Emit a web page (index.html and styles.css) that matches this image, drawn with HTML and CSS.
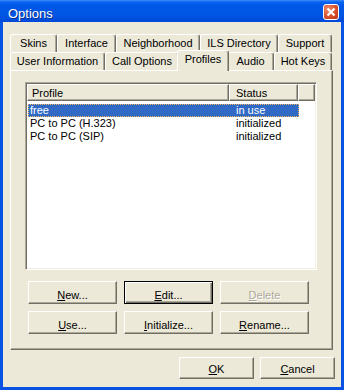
FILE: index.html
```html
<!doctype html>
<html lang="en">

<head>
  <meta charset="utf-8">
  <title>Options</title>
  <meta name="viewport" content="width=device-width, initial-scale=1">
  <link rel="stylesheet" href="styles.css">
</head>

<body>
  <div class="window">
    <div class="titlebar">
      <span class="title">Options</span>
      <span class="close-btn">
        <svg width="14" height="14" viewBox="0 0 14 14">
          <path d="M3.5 3.5 L10.5 10.5 M10.5 3.5 L3.5 10.5" stroke="#fff" stroke-width="2.2" fill="none" />
        </svg>
      </span>
    </div>

    <div class="client">
      <div class="tab-row tab-row-back">
        <div class="tab">Skins</div>
        <div class="tab">Interface</div>
        <div class="tab">Neighborhood</div>
        <div class="tab">ILS Directory</div>
        <div class="tab">Support</div>
      </div>
      <div class="tab-row tab-row-front">
        <div class="tab">User Information</div>
        <div class="tab">Call Options</div>
        <div class="tab selected">Profiles</div>
        <div class="tab">Audio</div>
        <div class="tab">Hot Keys</div>
      </div>

      <div class="panel">
        <div class="listview">
          <div class="lv-header">
            <div class="lv-col col-profile">Profile</div>
            <div class="lv-col col-status">Status</div>
            <div class="lv-col col-fill"></div>
          </div>
          <div class="lv-row selected"><span>free</span><span>in use</span></div>
          <div class="lv-row"><span>PC to PC (H.323)</span><span>initialized</span></div>
          <div class="lv-row"><span>PC to PC (SIP)</span><span>initialized</span></div>
        </div>

        <div class="btn-grid">
          <button class="btn"><u>N</u>ew...</button>
          <button class="btn btn-default"><u>E</u>dit...</button>
          <button class="btn" disabled><u>D</u>elete</button>
          <button class="btn"><u>U</u>se...</button>
          <button class="btn"><u>I</u>nitialize...</button>
          <button class="btn"><u>R</u>ename...</button>
        </div>
      </div>

      <div class="dialog-buttons">
        <button class="btn btn-dialog"><u>O</u>K</button>
        <button class="btn btn-dialog"><u>C</u>ancel</button>
      </div>
    </div>
  </div>
</body>

</html>
```

FILE: styles.css
```css
body {
  margin: 0;
  background: #fff;
  font-family: "Liberation Sans", Arial, sans-serif;
  font-size: 11px;
  color: #000;
}

.window {
  width: 344px;
  height: 390px;
  display: flex;
  flex-direction: column;
  background: #0652e2;
}

.titlebar {
  height: 22px;
  flex: none;
  display: flex;
  align-items: flex-start;
  justify-content: space-between;
  padding: 0 5px 0 8px;
  background: linear-gradient(#3d8ef8 0, #0c63f2 2px, #0058e8 5px, #0055e4 15px, #0049d9 22px);
  color: #fff;
}

.title {
  font-size: 13px;
  line-height: 15px;
  margin-top: 6px;
  text-shadow: 1px 1px #0a2f8f;
}

.close-btn {
  width: 16px;
  height: 16px;
  margin-top: 4px;
  box-sizing: border-box;
  border: 1px solid #fff;
  border-radius: 3px;
  background: radial-gradient(circle at 30% 30%, #f08a6a, #d9502c 55%, #b8341a);
  display: flex;
  align-items: center;
  justify-content: center;
}

.client {
  flex: 1;
  margin: 0 3px 3px;
  padding: 12px 8px 0 7px;
  background: #ece9d8;
  display: flex;
  flex-direction: column;
}

/* tab strip */

.tab-row {
  display: grid;
  height: 18px;
}

.tab-row-back {
  grid-template-columns: 47px 59px 84px 78px 54px;
}

.tab-row-front {
  grid-template-columns: 95px 74px 48px 47px 58px;
}

.tab {
  box-sizing: border-box;
  height: 18px;
  padding: 1px 0 0;
  border: 1px solid #fff;
  border-right-color: #716f64;
  border-bottom: none;
  border-radius: 3px 3px 0 0;
  box-shadow: inset -1px 0 #aca899;
  text-align: center;
  line-height: 15px;
  white-space: nowrap;
}

.tab.selected {
  position: relative;
  z-index: 1;
  height: 21px;
  margin: -2px -2px -1px;
  background: #ece9d8;
}

.panel {
  height: 280px;
  box-sizing: border-box;
  border: 1px solid #fff;
  border-right-color: #716f64;
  border-bottom-color: #716f64;
  box-shadow: inset -1px -1px #aca899;
  padding: 11px 0 0 14px;
}

/* list view */

.listview {
  width: 292px;
  height: 188px;
  box-sizing: border-box;
  padding: 1px;
  border: 1px solid;
  border-color: #aca899 #fff #fff #aca899;
  box-shadow: inset 1px 1px #716f64, inset -1px -1px #f1efe2;
  background: #fff;
}

.lv-header {
  display: flex;
  height: 17px;
  margin-bottom: 3px;
}

.lv-col {
  box-sizing: border-box;
  height: 17px;
  border: 1px solid;
  border-color: #fff #716f64 #716f64 #fff;
  box-shadow: inset -1px -1px #aca899;
  background: #ece9d8;
  padding: 1px 0 0 4px;
  line-height: 15px;
}

.col-profile {
  width: 202px;
}

.col-status {
  width: 69px;
  padding-left: 6px;
}

.col-fill {
  flex: 1;
}

.lv-row {
  display: grid;
  grid-template-columns: 201px 70px;
  width: 271px;
  height: 13px;
  margin-left: 1px;
  line-height: 13px;
  white-space: nowrap;
}

.lv-row span:first-child {
  padding-left: 2px;
}

.lv-row span:last-child {
  padding-left: 7px;
}

.lv-row.selected {
  background: #316ac5;
  color: #fff;
  outline: 1px dotted #f4b45a;
  outline-offset: -1px;
}

/* buttons */

.btn-grid {
  display: grid;
  grid-template-columns: repeat(3, 89px);
  column-gap: 7px;
  row-gap: 7px;
  margin: 11px 0 0 3px;
}

.btn {
  height: 23px;
  box-sizing: border-box;
  margin: 0;
  padding: 4px 0 0;
  border: 1px solid;
  border-color: #fff #716f64 #716f64 #fff;
  border-radius: 0;
  box-shadow: inset -1px -1px #aca899;
  background: #ece9d8;
  color: #000;
  font: inherit;
  line-height: 16px;
  text-align: center;
  vertical-align: top;
}

.btn-default {
  border-color: #000;
  box-shadow: inset 1px 1px #fff, inset -1px -1px #716f64, inset -2px -2px #aca899;
}

.btn:disabled {
  color: #aca899;
  text-shadow: 1px 1px #fff;
}

.dialog-buttons {
  display: flex;
  justify-content: flex-end;
  gap: 6px;
  margin: 7px -2px 0 0;
}

.btn-dialog {
  width: 75px;
  height: 22px;
  padding-top: 1px;
}
```
